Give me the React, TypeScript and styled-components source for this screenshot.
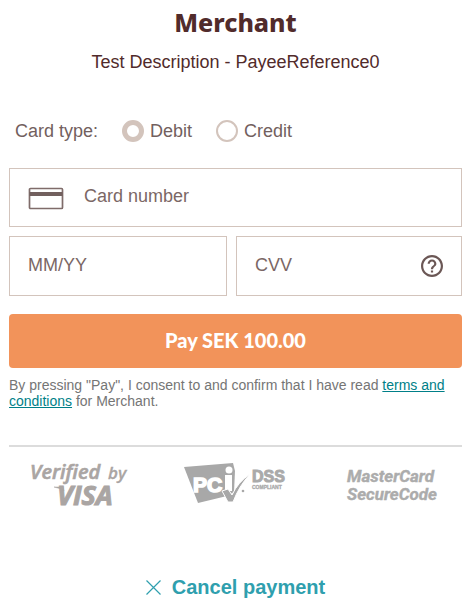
import React from "react";
import styled, { createGlobalStyle } from "styled-components";

const GlobalStyle = createGlobalStyle`
  *, *::before, *::after { box-sizing: border-box; }
  body {
    margin: 0;
    background: #ffffff;
    color: #512b2b;
    font-family: "Liberation Sans", Arial, sans-serif;
    font-size: 18px;
    line-height: 24px;
  }
`;

const Page = styled.main`
  display: flex;
  flex-direction: column;
  padding: 5px 13px 0 9px;
`;

const Header = styled.header`
  text-align: center;
`;

const Title = styled.h1`
  margin: 0;
  font-family: "Noto Sans", sans-serif;
  font-size: 25px;
  font-weight: 800;
  line-height: 34px;
`;

const Description = styled.p`
  margin: 11px 0 0;
`;

const Form = styled.form`
  display: flex;
  flex-direction: column;
  margin-top: 45px;
`;

const CardType = styled.fieldset`
  display: flex;
  align-items: center;
  min-width: 0;
  margin: 0 0 25px;
  padding: 0 6px;
  border: 0;
  color: #72605e;
`;

const CardTypeLabel = styled.legend`
  float: left;
  padding: 0;
  margin-right: 24px;
`;

const RadioOption = styled.label`
  display: flex;
  align-items: center;
  gap: 6px;
  margin-right: 24px;
  cursor: pointer;
`;

const Radio = styled.input`
  appearance: none;
  width: 22px;
  height: 22px;
  margin: 0;
  border: 2px solid #d3c4bc;
  border-radius: 50%;
  background: #ffffff;
  &:checked { border-width: 5px; }
`;

const Fields = styled.div`
  display: grid;
  grid-template-columns: minmax(0, 218fr) minmax(0, 226fr);
  gap: 9px;
`;

const Field = styled.div<{ $wide?: boolean }>`
  display: flex;
  align-items: center;
  gap: 20px;
  height: ${(p) => (p.$wide ? 59 : 60)}px;
  padding: 0 18px;
  border: 1px solid #d3c4bc;
  color: #72605e;
  ${(p) => p.$wide && "grid-column: 1 / -1;"}
`;

const Input = styled.input`
  flex: 1;
  width: 100%;
  min-width: 0;
  height: 100%;
  padding: 0 0 2px;
  border: 0;
  outline: 0;
  background: transparent;
  color: inherit;
  font: inherit;
  &::placeholder { color: #7b6765; opacity: 1; }
`;

const HelpButton = styled.button`
  display: flex;
  padding: 0;
  border: 0;
  background: none;
  color: inherit;
  cursor: pointer;
`;

const PayButton = styled.button`
  height: 54px;
  margin-top: 18px;
  padding: 0 0 2px;
  border: 0;
  border-radius: 4px;
  background: #f2935a;
  color: #ffffff;
  font-family: Lato, sans-serif;
  font-size: 20px;
  font-weight: 900;
  cursor: pointer;
`;

const Consent = styled.p`
  margin: 9px 0 0;
  color: #757575;
  font-size: 14px;
  line-height: 16px;
`;

const TermsLink = styled.a`
  color: #007f88;
`;

const Footer = styled.footer`
  display: flex;
  flex-direction: column;
  margin-top: 36px;
  border-top: 2px solid #dcdcdc;
`;

const Badges = styled.div`
  display: flex;
  justify-content: space-between;
  padding: 13px 24px 0 20px;
`;

const CancelButton = styled.button`
  display: flex;
  align-items: center;
  align-self: center;
  gap: 11px;
  margin-top: 65px;
  padding: 0;
  border: 0;
  background: none;
  color: #2f9fae;
  font: inherit;
  font-size: 20px;
  font-weight: 700;
  cursor: pointer;
`;

const CardIcon = () => (
  <svg width="36" height="24" viewBox="0 0 36 24" fill="none" aria-hidden="true">
    <rect x="1.5" y="2.5" width="33" height="20" rx="1" stroke="#7f6c6a" strokeWidth="1.7" />
    <rect x="1.5" y="6" width="33" height="4" fill="#72605e" />
  </svg>
);

const HelpIcon = () => (
  <svg width="22" height="22" viewBox="2 2 20 20" fill="#6b5755" aria-hidden="true">
    <path d="M11 16h2v2h-2zM12 2C6.48 2 2 6.48 2 12s4.48 10 10 10 10-4.48 10-10S17.52 2 12 2zm0 18c-4.41 0-8-3.59-8-8s3.59-8 8-8 8 3.59 8 8-3.59 8-8 8zm0-14c-2.21 0-4 1.79-4 4h2c0-1.1.9-2 2-2s2 .9 2 2c0 2-3 1.75-3 5h2c0-2.25 3-2.5 3-5 0-2.21-1.79-4-4-4z" />
  </svg>
);

const VerifiedByVisa = () => (
  <svg width="102" height="50" viewBox="0 0 102 50" role="img" aria-label="Verified by VISA" fill="#aaa5a3" stroke="#aaa5a3" fontFamily="Open Sans, sans-serif" fontStyle="italic">
    <text x="1" y="19" fontSize="20" fontWeight="600" strokeWidth=".6">Verified</text>
    <text x="79" y="19" fontSize="17" fontWeight="600" strokeWidth=".3">by</text>
    <text x="28" y="45" fontSize="27" fontWeight="700" strokeWidth="1">VISA</text>
    <path d="M25 27h9l1 4q-4-3-10-4z" strokeWidth=".5" />
  </svg>
);

const PciDss = () => (
  <svg width="110" height="50" viewBox="-3 0 110 50" role="img" aria-label="PCI DSS compliant" fontFamily="Liberation Sans, Arial, sans-serif" fontWeight="700">
    <path d="M-3 7l49-4 2 8-1 21-7 4-29 7z" fill="#a8a8a8" />
    <text x="6" y="32" fontSize="21" fill="#ffffff" stroke="#ffffff" strokeWidth="1.6">PC</text>
    <path d="M38 15h7v16h-7z" fill="#ffffff" />
    <circle cx="42" cy="10" r="3.5" fill="#ffffff" />
    <path d="M35 31l6-2 4 6q6-13 18-21-11 12-17 28h-5z" fill="#a8a8a8" stroke="#ffffff" strokeWidth="1" />
    <circle cx="56" cy="31" r="1.3" fill="#a8a8a8" />
    <text x="65" y="22" fontSize="16" fill="#aaaaaa" stroke="#aaaaaa" strokeWidth="1">DSS</text>
    <text x="65" y="29" fontSize="5" fill="#aaaaaa" stroke="#aaaaaa" strokeWidth=".3">COMPLIANT</text>
  </svg>
);

const SecureCode = () => (
  <svg width="92" height="50" viewBox="0 0 92 50" role="img" aria-label="MasterCard SecureCode" fill="#acacac" stroke="#acacac" strokeWidth=".4" fontFamily="Roboto, sans-serif" fontSize="17" fontStyle="italic" fontWeight="700">
    <text x="1" y="22">MasterCard</text>
    <text x="1" y="40">SecureCode</text>
  </svg>
);

const CloseIcon = () => (
  <svg width="15" height="15" viewBox="0 0 15 15" fill="none" stroke="#2f9fae" strokeWidth="1.2" aria-hidden="true">
    <path d="M.5.5l14 14M14.5.5l-14 14" />
  </svg>
);

export default function App() {
  return (
    <>
      <GlobalStyle />
      <Page>
        <Header>
          <Title>Merchant</Title>
          <Description>Test Description - PayeeReference0</Description>
        </Header>
        <Form onSubmit={(event) => event.preventDefault()}>
          <CardType>
            <CardTypeLabel>Card type:</CardTypeLabel>
            <RadioOption>
              <Radio type="radio" name="cardType" value="debit" defaultChecked />
              Debit
            </RadioOption>
            <RadioOption>
              <Radio type="radio" name="cardType" value="credit" />
              Credit
            </RadioOption>
          </CardType>
          <Fields>
            <Field $wide>
              <CardIcon />
              <Input aria-label="Card number" placeholder="Card number" inputMode="numeric" />
            </Field>
            <Field>
              <Input aria-label="Expiry date" placeholder="MM/YY" inputMode="numeric" />
            </Field>
            <Field>
              <Input aria-label="Security code" placeholder="CVV" inputMode="numeric" />
              <HelpButton type="button" aria-label="About the security code">
                <HelpIcon />
              </HelpButton>
            </Field>
          </Fields>
          <PayButton type="submit">Pay SEK 100.00</PayButton>
          <Consent>
            By pressing "Pay", I consent to and confirm that I have read{" "}
            <TermsLink href="#terms">terms and conditions</TermsLink> for Merchant.
          </Consent>
        </Form>
        <Footer>
          <Badges>
            <VerifiedByVisa />
            <PciDss />
            <SecureCode />
          </Badges>
          <CancelButton type="button">
            <CloseIcon />
            Cancel payment
          </CancelButton>
        </Footer>
      </Page>
    </>
  );
}
